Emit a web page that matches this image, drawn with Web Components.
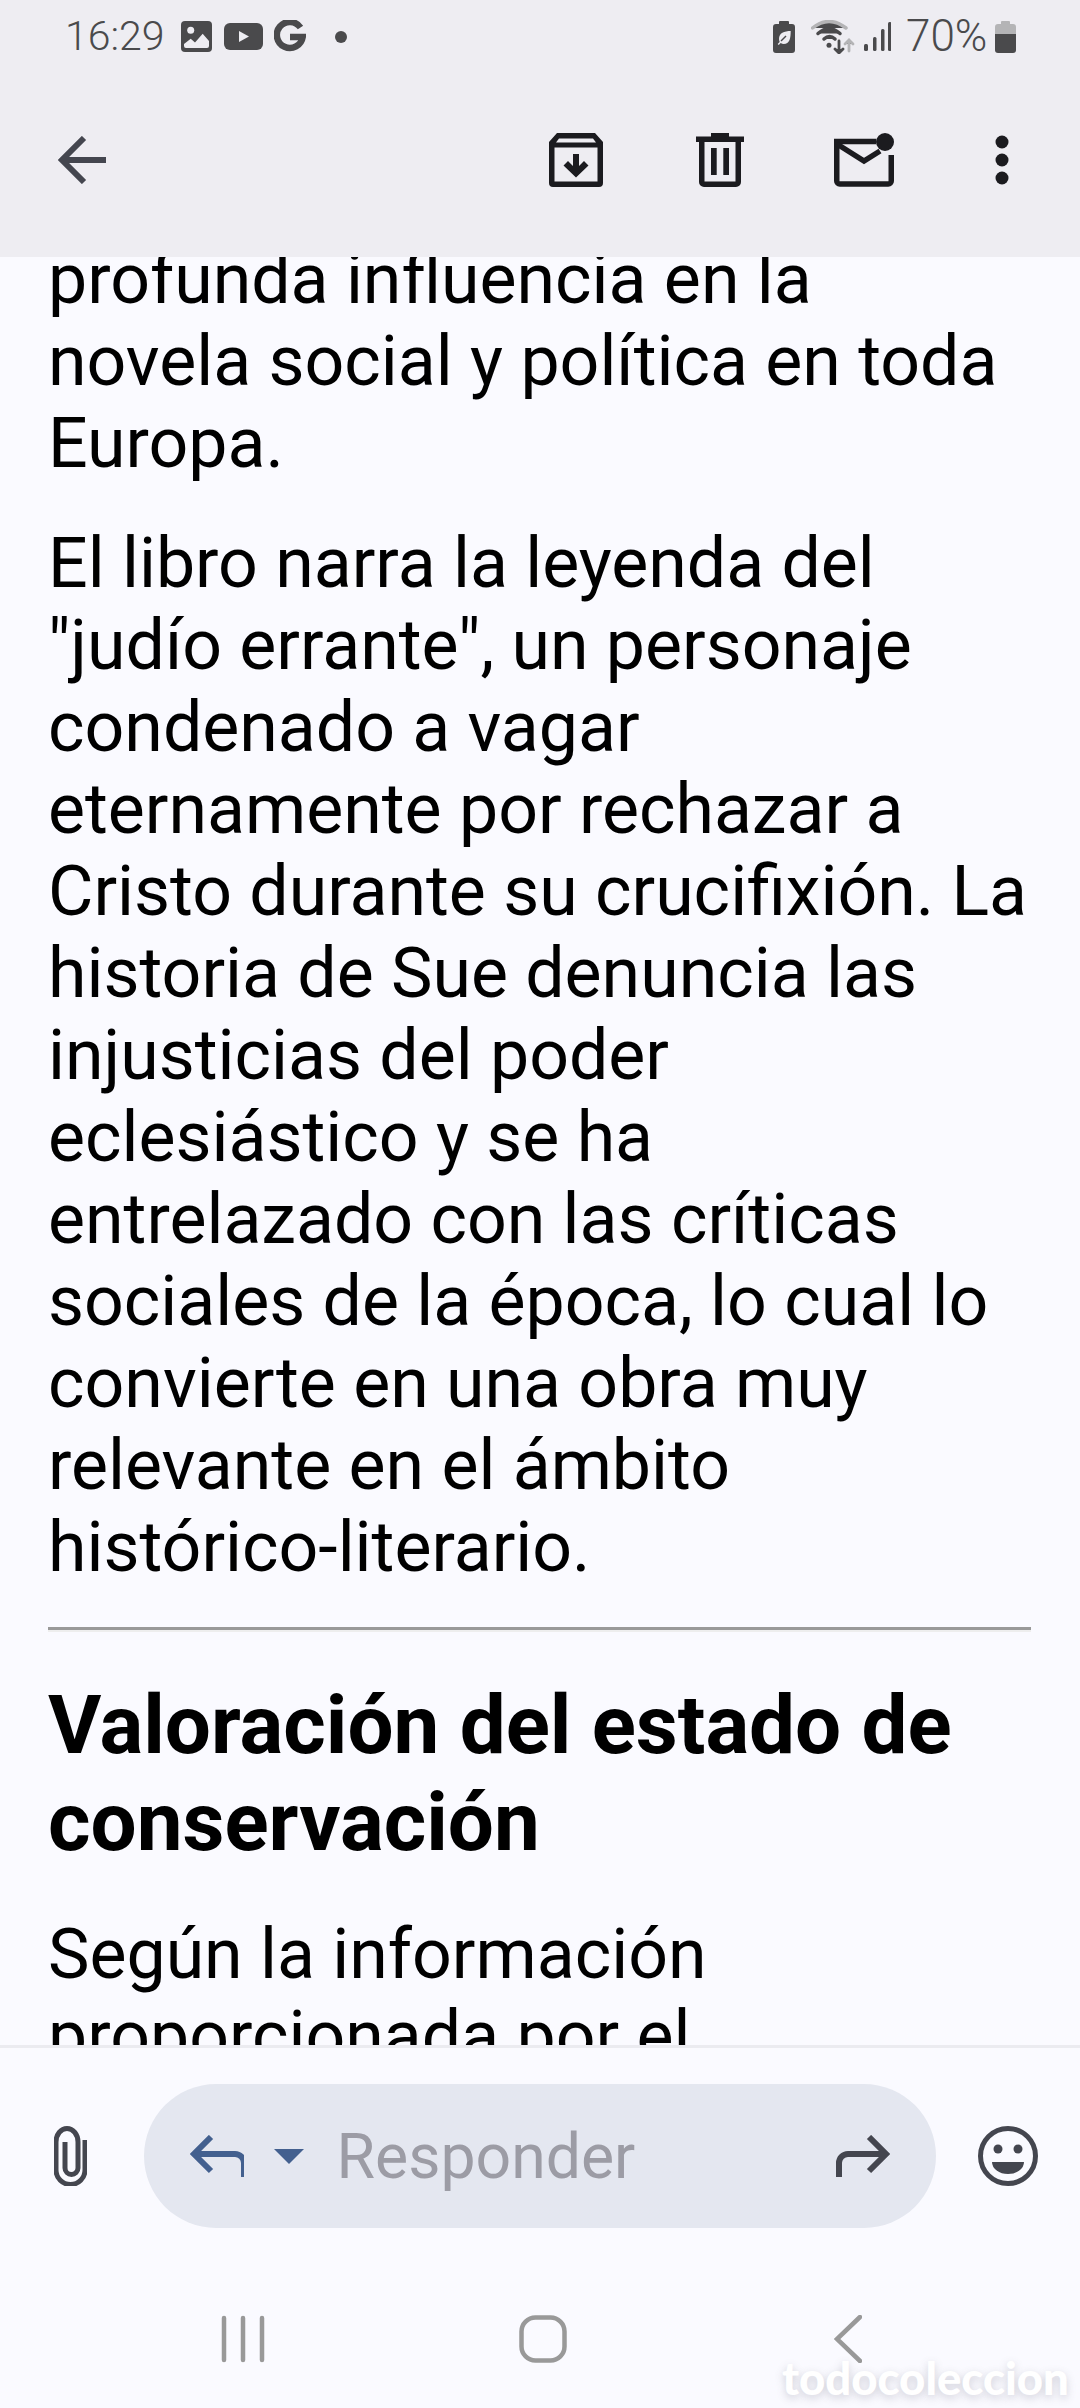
<!DOCTYPE html>
<html lang="es">
<head>
<meta charset="utf-8">
<title>Correo</title>
<style>
  html, body { margin: 0; padding: 0; background: #fafaff; }
</style>
</head>
<body>
<mail-screen>
  <status-bar slot="top"></status-bar>
  <mail-toolbar slot="top"></mail-toolbar>
  <mail-body>
    <p>profunda influencia en la<br>novela social y política en toda<br>Europa.</p>
    <p>El libro narra la leyenda del<br>"judío errante", un personaje<br>condenado a vagar<br>eternamente por rechazar a<br>Cristo durante su crucifixión. La<br>historia de Sue denuncia las<br>injusticias del poder<br>eclesiástico y se ha<br>entrelazado con las críticas<br>sociales de la época, lo cual lo<br>convierte en una obra muy<br>relevante en el ámbito<br>histórico-literario.</p>
    <hr>
    <h2>Valoración del estado de<br>conservación</h2>
    <p>Según la información<br>proporcionada por el</p>
  </mail-body>
  <reply-bar slot="bottom"></reply-bar>
  <nav-bar slot="bottom"></nav-bar>
  <water-mark>todocoleccion</water-mark>
</mail-screen>

<script>
class MailScreen extends HTMLElement {
  constructor() {
    super();
    this.attachShadow({ mode: "open" });
    this.shadowRoot.innerHTML = `
      <style>
        :host {
          display: flex;
          flex-direction: column;
          position: relative;
          width: 1080px;
          height: 2408px;
          overflow: hidden;
          background: #fafaff;
          font-family: Roboto, "Liberation Sans", sans-serif;
        }
        .top { flex: none; background: #eeedf2; height: 257px; }
        .bottom { flex: none; height: 363px; }
        .main { flex: 1; min-height: 0; overflow: hidden; }
      </style>
      <div class="top"><slot name="top"></slot></div>
      <div class="main"><slot></slot></div>
      <div class="bottom"><slot name="bottom"></slot></div>
    `;
  }
}

class StatusBar extends HTMLElement {
  constructor() {
    super();
    this.attachShadow({ mode: "open" });
    this.shadowRoot.innerHTML = `
      <style>
        :host {
          display: flex;
          align-items: center;
          height: 73px;
          padding: 0 64px 0 65px;
          color: #4a4a4c;
          font-weight: 300;
        }
        svg { display: block; flex: none; fill: #4a4a4c; }
        .time { width: 116px; font-size: 41px; line-height: 73px; }
        .spacer { flex: 1; }
        .pct { width: 81px; margin: 0 8px 0 15px; font-size: 44px; line-height: 73px; white-space: nowrap; }
      </style>
      <span class="time">16:29</span>
      <svg width="31" height="31" viewBox="0 0 31 31" style="margin-right:12px">
        <rect width="31" height="31" rx="4"/>
        <path fill="#eeedf2" d="M3 23l6.700-5.300 4.300 3.800 7.700-8.800L28 20v5a2 2 0 0 1-2 2H5a2 2 0 0 1-2-2z"/>
        <circle cx="9.700" cy="9.300" r="3.500" fill="#eeedf2"/>
      </svg>
      <svg width="39" height="27" viewBox="0 0 39 27" style="margin-right:11px">
        <rect width="39" height="27" rx="6"/>
        <path fill="#eeedf2" d="M15 8v11l10-5.500z"/>
      </svg>
      <svg width="32" height="33" viewBox="0 0 32 33" style="margin-right:29px">
        <path d="M26.500 7.500A13 13 0 1 0 28.700 17H16" fill="none" stroke="#4a4a4c" stroke-width="6.500"/>
      </svg>
      <svg width="12" height="12" viewBox="0 0 12 12"><circle cx="6" cy="6" r="6"/></svg>
      <span class="spacer"></span>
      <svg width="22" height="32" viewBox="0 0 22 32" style="margin-right:16px">
        <path d="M7 0h8a1 1 0 0 1 1 1v2h3a3 3 0 0 1 3 3v23a3 3 0 0 1-3 3H3a3 3 0 0 1-3-3V6a3 3 0 0 1 3-3h3V1a1 1 0 0 1 1-1z"/>
        <path fill="#eeedf2" d="M18 10c-7 0-12 2-12 8 0 1 .3 2 .7 3l-2 2 1 1 2-2c1 .6 2 1 3 1 6 0 7-6 7-13z"/>
        <path d="M8 20l5-5" stroke="#4a4a4c" stroke-width="1.500"/>
      </svg>
      <svg width="44" height="34" viewBox="0 0 44 34" style="margin-right:9px" fill="none" stroke-linecap="round">
        <path d="M1.500 8Q18 -5 35 8" stroke="#b4b4b6" stroke-width="3.500"/>
        <path d="M7 13.500Q18 4 29 13.500" stroke="#4a4a4c" stroke-width="3.500"/>
        <path d="M13 19Q18.500 14 24 19" stroke="#4a4a4c" stroke-width="3.500"/>
        <circle cx="18" cy="25.300" r="2.500" style="fill:#4a4a4c"/>
        <path d="M28 21v12M24 29l4 4 4-4" stroke="#4a4a4c" stroke-width="2.800"/>
        <path d="M38 31V20M34 24l4-4 4 4" stroke="#b4b4b6" stroke-width="2.800"/>
      </svg>
      <svg width="27" height="29" viewBox="0 0 27 29">
        <rect x="0" y="22" width="4" height="7" rx="1.500"/>
        <rect x="9" y="15" width="3.500" height="14" rx="1.500"/>
        <rect x="17" y="7" width="3.500" height="22" rx="1.500"/>
        <rect x="24" y="0" width="3.500" height="29" rx="1.500"/>
      </svg>
      <span class="pct">70%</span>
      <svg width="21" height="32" viewBox="0 0 21 32">
        <path fill="#b4b4b6" d="M7 0h7a1 1 0 0 1 1 1v2h3a3 3 0 0 1 3 3v7H0V6a3 3 0 0 1 3-3h3V1a1 1 0 0 1 1-1z"/>
        <path d="M0 13h21v16a3 3 0 0 1-3 3H3a3 3 0 0 1-3-3z"/>
      </svg>
    `;
  }
}

class MailToolbar extends HTMLElement {
  constructor() {
    super();
    this.attachShadow({ mode: "open" });
    this.shadowRoot.innerHTML = `
      <style>
        :host {
          display: flex;
          align-items: center;
          height: 174px;
          padding: 0 71px 0 58px;
          box-sizing: border-box;
        }
        svg { display: block; flex: none; }
        .back { margin-right: auto; }
      </style>
      <svg class="back" width="48" height="48" viewBox="0 0 48 48" fill="none" stroke="#44464f" stroke-width="6">
        <path d="M48 24H4M26 2L4 24l22 22"/>
      </svg>
      <svg width="54" height="54" viewBox="0 0 54 54" fill="#1b1b1f" style="margin-right:93px">
        <path fill-rule="evenodd" d="M8 0h38l8 9v41a4 4 0 0 1-4 4H4a4 4 0 0 1-4-4V9zM5.500 14.500v34h43v-34zM10 5.500l-3 4h40l-3-4z"/>
        <path d="M24 21h6v12l5-5 4.500 4.500L27 44.500 14.500 32.500 19 28l5 5z"/>
      </svg>
      <svg width="48" height="54" viewBox="0 0 48 54" fill="#1b1b1f" style="margin-right:90px">
        <path fill-rule="evenodd" d="M15 0h18v3.500h15V9h-3v40a5 5 0 0 1-5 5H8a5 5 0 0 1-5-5V9H0V3.500h15zM8.500 9v39.500h31V9z"/>
        <rect x="15" y="15" width="5.700" height="27"/>
        <rect x="27.300" y="15" width="5.700" height="27"/>
      </svg>
      <svg width="60" height="54" viewBox="0 0 60 54" fill="none" stroke="#1b1b1f" stroke-width="5.500" style="margin-right:101px">
        <path d="M42 8.500H2.750V48a3 3 0 0 0 3 3h48.500a3 3 0 0 0 3-3V22"/>
        <path d="M3 11l27 17 16-10"/>
        <circle cx="51" cy="9" r="9" fill="#1b1b1f" stroke="none"/>
      </svg>
      <svg width="14" height="54" viewBox="0 0 14 54" fill="#1b1b1f">
        <circle cx="7" cy="9" r="6.500"/><circle cx="7" cy="27" r="6.500"/><circle cx="7" cy="45" r="6.500"/>
      </svg>
    `;
  }
}

class MailBody extends HTMLElement {
  constructor() {
    super();
    this.attachShadow({ mode: "open" });
    this.shadowRoot.innerHTML = `
      <style>
        :host {
          display: block;
          padding: 0 48px;
          margin-top: -19px;
          color: #000;
          font-size: 69.800px;
          line-height: 82px;
        }
        ::slotted(p) { margin: 0 0 38px; white-space: nowrap; }
        ::slotted(hr) {
          margin: 39px 0 45px;
          width: 983px;
          height: 0;
          border: 0;
          border-top: 3px solid #999;
          border-bottom: 2px solid #eeeeee;
        }
        ::slotted(h2) { margin: 0 0 42px; font-size: 81.700px; line-height: 97px; font-weight: 700; white-space: nowrap; }
      </style>
      <slot></slot>
    `;
  }
}

class ReplyBar extends HTMLElement {
  constructor() {
    super();
    this.attachShadow({ mode: "open" });
    this.shadowRoot.innerHTML = `
      <style>
        :host {
          display: flex;
          align-items: center;
          height: 226px;
          box-sizing: border-box;
          padding: 36px 42px 43px 54px;
          border-top: 3px solid #ebebf0;
          background: #fafaff;
        }
        svg { display: block; flex: none; }
        .pill {
          flex: 1;
          display: flex;
          align-items: center;
          height: 144px;
          margin: 0 42px 0 57px;
          padding: 0 46px;
          border-radius: 72px;
          background: #e4e7f0;
        }
        .label { flex: 1; margin-left: 32.500px; font-size: 62.500px; color: #9c9ca5; font-weight: 400; }
      </style>
      <svg width="33" height="60" viewBox="0 0 33 60" fill="none" stroke="#44464f" stroke-width="5">
        <path d="M31 14v30a14.500 14.500 0 0 1-29 0V16a11 13.500 0 0 1 22 0v26a6 6 0 0 1-13 0V16"/>
      </svg>
      <div class="pill">
        <svg width="54" height="42" viewBox="0 0 54 42" fill="none" stroke="#43608f" stroke-width="6">
          <path d="M54 42V28a9 9 0 0 0-9-9H4M21 2L4 19l17 17"/>
        </svg>
        <svg width="30" height="15" viewBox="0 0 30 15" fill="#43608f" style="margin-left:30px"><path d="M0 0h30L15 15z"/></svg>
        <span class="label">Responder</span>
        <svg width="54" height="42" viewBox="0 0 54 42" fill="none" stroke="#44464f" stroke-width="6">
          <path d="M3 42V28a9 9 0 0 1 9-9h38M33 2l17 17-17 17"/>
        </svg>
      </div>
      <svg width="60" height="60" viewBox="0 0 60 60">
        <circle cx="30" cy="30" r="27.500" fill="none" stroke="#44464f" stroke-width="5"/>
        <circle cx="20" cy="23" r="4.500" fill="#44464f"/><circle cx="40" cy="23" r="4.500" fill="#44464f"/>
        <path d="M14 36h32a16 12 0 0 1-32 0z" fill="#44464f"/>
      </svg>
    `;
  }
}

class NavBar extends HTMLElement {
  constructor() {
    super();
    this.attachShadow({ mode: "open" });
    this.shadowRoot.innerHTML = `
      <style>
        :host {
          display: flex;
          align-items: flex-start;
          height: 137px;
          box-sizing: border-box;
          padding: 44px 0 0 221px;
        }
        svg { display: block; flex: none; }
      </style>
      <svg width="44" height="48" viewBox="0 0 44 48" fill="none" stroke="#999" stroke-width="4.500" stroke-linecap="round">
        <path d="M3 3v42M22 3v42M41 3v42"/>
      </svg>
      <svg width="48" height="48" viewBox="0 0 48 48" fill="none" stroke="#999" stroke-width="4.500" style="margin-left:254px">
        <rect x="2.500" y="2.500" width="43" height="43" rx="14"/>
      </svg>
      <svg width="28" height="48" viewBox="0 0 28 48" fill="none" stroke="#999" stroke-width="4.500" stroke-linecap="round" style="margin-left:267px">
        <path d="M26 2L3 24l23 22"/>
      </svg>
    `;
  }
}

class WaterMark extends HTMLElement {
  constructor() {
    super();
    this.attachShadow({ mode: "open" });
    this.shadowRoot.innerHTML = `
      <style>
        :host {
          position: absolute;
          left: 782px;
          top: 2351px;
          color: #fff;
          font-family: Lato, sans-serif;
          font-weight: 900;
          font-size: 45.500px;
          line-height: 54px;
          text-shadow: 0 3px 8px rgba(80, 80, 100, .25);
        }
      </style>
      <slot></slot>
    `;
  }
}

customElements.define("mail-screen", MailScreen);
customElements.define("status-bar", StatusBar);
customElements.define("mail-toolbar", MailToolbar);
customElements.define("mail-body", MailBody);
customElements.define("reply-bar", ReplyBar);
customElements.define("nav-bar", NavBar);
customElements.define("water-mark", WaterMark);
</script>
</body>
</html>
